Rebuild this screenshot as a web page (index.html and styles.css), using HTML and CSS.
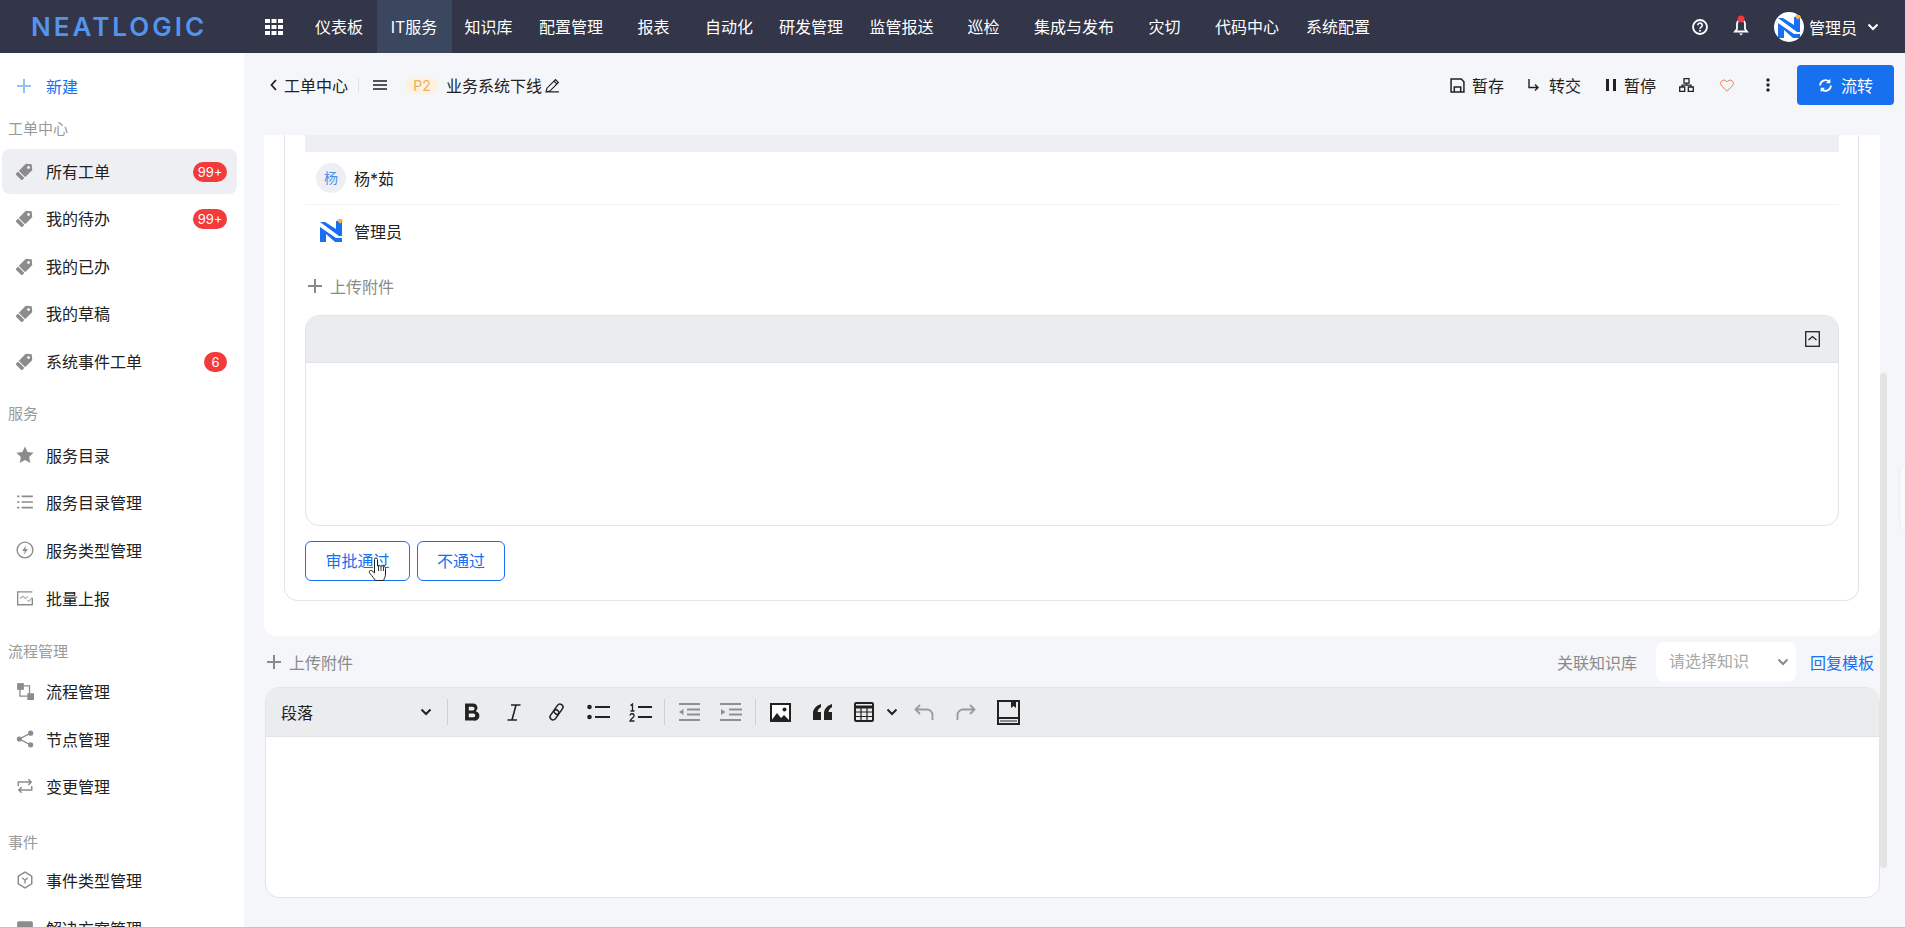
FILE: index.html
```html
<!DOCTYPE html>
<html>
<head>
  <meta charset="utf-8">
  <title>工单中心</title>
  <link rel="stylesheet" href="styles.css">
</head>
<body>
<svg class="defs" width="0" height="0">
  <symbol id="tag" viewBox="0 0 18 18"><g transform="rotate(45 9 9)"><path d="M9 -.5l4.200 3.500a1 1 0 0 1 .3.700V17a1 1 0 0 1-1 1h-7a1 1 0 0 1-1-1V3.700a1 1 0 0 1 .3-.7z" fill="#8c8c8c"/><circle cx="9" cy="4" r="1.400" fill="#fff"/><path d="M4 13.800h10" stroke="#fff" stroke-width="1"/></g></symbol>
  <symbol id="mark" viewBox="0 0 24 24"><path d="M1 3h5l11 7V2h6v15h-3z" fill="#1670f0"/><path d="M1 8l16 11h6v4h-7L7 15v8H1z" fill="#1670f0"/><path d="M19.500 0h3l1.500 1.800-3 3-3-3z" fill="#f0b44c"/></symbol>
  <symbol id="chev" viewBox="0 0 12 8"><path d="M1.500 1.500L6 6l4.500-4.500" fill="none" stroke="currentColor" stroke-width="2"/></symbol>
</svg>

<div class="app">
  <header class="topbar">
    <div class="logo">NEATLOGIC</div>
    <svg class="apps" width="18" height="16" viewBox="0 0 18 16" fill="#fff">
      <rect x="0" y="0" width="5" height="4"/><rect x="6.500" y="0" width="5" height="4"/><rect x="13" y="0" width="5" height="4"/>
      <rect x="0" y="6" width="5" height="4"/><rect x="6.500" y="6" width="5" height="4"/><rect x="13" y="6" width="5" height="4"/>
      <rect x="0" y="12" width="5" height="4"/><rect x="6.500" y="12" width="5" height="4"/><rect x="13" y="12" width="5" height="4"/>
    </svg>
    <nav class="nav">
      <a>仪表板</a><a class="on">IT服务</a><a>知识库</a><a>配置管理</a><a>报表</a><a>自动化</a><a>研发管理</a><a>监管报送</a><a>巡检</a><a>集成与发布</a><a>灾切</a><a>代码中心</a><a>系统配置</a>
    </nav>
    <div class="top-right">
      <svg width="16" height="16" viewBox="0 0 16 16"><circle cx="8" cy="8" r="7" fill="none" stroke="#fff" stroke-width="1.800"/><path d="M5.800 6.300a2.200 2.200 0 1 1 3.400 1.800c-.8.500-1.200.9-1.200 1.700" fill="none" stroke="#fff" stroke-width="1.600"/><circle cx="8" cy="11.800" r="1" fill="#fff"/></svg>
      <svg class="bell" width="14" height="21" viewBox="0 0 14 21"><path d="M7 5a4 4 0 0 0-4 4v5l-2 2.500h12L11 14V9a4 4 0 0 0-4-4z" fill="none" stroke="#fff" stroke-width="1.800"/><path d="M5 18.500h4L7 20.500z" fill="#fff"/><circle cx="7" cy="4" r="3.500" fill="#f33b3b"/></svg>
      <div class="top-user">
        <div class="top-avatar"><svg width="24" height="24"><use href="#mark"/></svg></div>
        <span>管理员</span>
        <svg class="top-chev" width="12" height="8"><use href="#chev"/></svg>
      </div>
    </div>
  </header>

  <div class="layout">
    <aside class="side">
      <a class="side-new">
        <svg width="14" height="14" viewBox="0 0 14 14"><path d="M7 0v14M0 7h14" stroke="#8cc3f9" stroke-width="2"/></svg>
        <span>新建</span>
      </a>
      <div class="side-label side-label-first">工单中心</div>
      <a class="side-row active"><svg class="ico"><use href="#tag"/></svg>所有工单<b class="badge">99+</b></a>
      <a class="side-row"><svg class="ico"><use href="#tag"/></svg>我的待办<b class="badge">99+</b></a>
      <a class="side-row"><svg class="ico"><use href="#tag"/></svg>我的已办</a>
      <a class="side-row"><svg class="ico"><use href="#tag"/></svg>我的草稿</a>
      <a class="side-row"><svg class="ico"><use href="#tag"/></svg>系统事件工单<b class="badge badge-one">6</b></a>

      <div class="side-label side-label-service">服务</div>
      <a class="side-row"><svg class="ico" viewBox="0 0 16 16"><path d="M8 .5l2.300 4.900 5.300.7-3.900 3.700 1 5.300L8 12.500l-4.700 2.600 1-5.300L.4 6.100l5.300-.7z" fill="#8c8c8c"/></svg>服务目录</a>
      <a class="side-row"><svg class="ico" viewBox="0 0 16 16"><path d="M1 3h2M5 3h10M1 8h2M5 8h10M1 13h2M5 13h10" stroke="#8c8c8c" stroke-width="1.400"/></svg>服务目录管理</a>
      <a class="side-row"><svg class="ico" viewBox="0 0 16 16"><circle cx="8" cy="8" r="7" fill="none" stroke="#8c8c8c" stroke-width="1.200"/><path d="M9 3.500L5.500 8.800h2.300L7 12.500l3.500-5.300H8.200z" fill="#8c8c8c"/></svg>服务类型管理</a>
      <a class="side-row"><svg class="ico" viewBox="0 0 16 16"><path d="M14.500 8v6h-13V2.500h13" fill="none" stroke="#8c8c8c" stroke-width="1.200"/><path d="M3.500 8.500l2.500-2 2.500 2 2-2M10 10l1.500 1 3-3.500" fill="none" stroke="#aaa" stroke-width="1"/></svg>批量上报</a>

      <div class="side-label side-label-flow">流程管理</div>
      <a class="side-row"><svg class="ico" viewBox="0 0 16 16"><rect x="1" y="1" width="6" height="6" fill="#8c8c8c"/><rect x="10" y="10" width="6" height="6" fill="#8c8c8c"/><path d="M7 3.500h5v6.500M3.500 7v5.500H10" fill="none" stroke="#8c8c8c" stroke-width="1.200"/></svg>流程管理</a>
      <a class="side-row"><svg class="ico" viewBox="0 0 16 16"><circle cx="13" cy="2.800" r="2.300" fill="#8c8c8c"/><circle cx="13" cy="13.200" r="2.300" fill="#8c8c8c"/><circle cx="3" cy="8" r="2.300" fill="#8c8c8c"/><path d="M13 2.800L3 8l10 5.200" fill="none" stroke="#8c8c8c" stroke-width="1.200"/></svg>节点管理</a>
      <a class="side-row"><svg class="ico" viewBox="0 0 16 16"><path d="M2 8V4.500h11M11 2l2.500 2.500L11 7M14 8v3.500H3M5 9l-2.500 2.500L5 14" fill="none" stroke="#8c8c8c" stroke-width="1.300"/></svg>变更管理</a>

      <div class="side-label side-label-event">事件</div>
      <a class="side-row"><svg class="ico" viewBox="0 0 16 16"><path d="M8 1l6 3.500v7L8 15l-6-3.500v-7z" fill="none" stroke="#8c8c8c" stroke-width="1.300"/><path d="M5.500 6L8 8.200 10.500 6M8 8.200V11" fill="none" stroke="#8c8c8c" stroke-width="1.200"/></svg>事件类型管理</a>
      <a class="side-row"><svg class="ico" viewBox="0 0 16 16"><rect x="1" y="2" width="14" height="12" rx="1.500" fill="#8c8c8c"/></svg>解决方案管理</a>
    </aside>

    <main class="main">
      <div class="subbar">
        <div class="crumb">
          <svg width="7" height="12" viewBox="0 0 7 12"><path d="M6 1L1.500 6 6 11" fill="none" stroke="#212121" stroke-width="1.800"/></svg>
          <span class="crumb-back">工单中心</span>
          <i class="crumb-line"></i>
          <svg class="crumb-menu" width="14" height="10" viewBox="0 0 14 10"><path d="M0 1h14M0 5h14M0 9h14" stroke="#212121" stroke-width="1.400"/></svg>
          <span class="prio">P2</span>
          <span class="crumb-title">业务系统下线</span>
          <svg width="15" height="15" viewBox="0 0 14 14"><path d="M1 13l.8-3.500L9.800 1.500l2.700 2.700-8 8zM8.500 3l2.500 2.500M1 13h12" fill="none" stroke="#212121" stroke-width="1.100"/></svg>
        </div>
        <div class="actions">
          <a class="act"><svg width="15" height="15" viewBox="0 0 14 14"><path d="M1 1h9.500L13 3.500V13H1zM4 13V8.500h6V13" fill="none" stroke="#212121" stroke-width="1.400"/></svg>暂存</a>
          <a class="act act-turn"><svg width="13" height="14" viewBox="0 0 13 14"><path d="M2 1v8.500h9M8 6.500l3 3-3 3" fill="none" stroke="#212121" stroke-width="1.400"/></svg>转交</a>
          <a class="act act-pause"><svg width="10" height="12" viewBox="0 0 10 12"><path d="M0 0h3v12H0zM7 0h3v12H7z" fill="#212121"/></svg>暂停</a>
          <svg class="act-icon" width="15" height="14" viewBox="0 0 15 14"><path d="M5 .7h5v4.500H5zM.7 9h5v4.300h-5zM9.300 9h5v4.300h-5zM7.500 5.200v2H3v2M7.500 7.200H12v2" fill="none" stroke="#212121" stroke-width="1.300"/></svg>
          <svg class="act-heart" width="14" height="13" viewBox="0 0 14 13"><path d="M7 12.200L1.500 6.800a3.400 3.400 0 0 1 0-4.700 3.400 3.400 0 0 1 4.800 0l.7.800.7-.8a3.400 3.400 0 0 1 4.800 0 3.400 3.400 0 0 1 0 4.700z" fill="none" stroke="#e8825a" stroke-width="1"/></svg>
          <svg class="act-dots" width="4" height="14" viewBox="0 0 4 14" fill="#212121"><circle cx="2" cy="2" r="1.700"/><circle cx="2" cy="7" r="1.700"/><circle cx="2" cy="12" r="1.700"/></svg>
          <a class="flow-btn"><svg width="15" height="15" viewBox="0 0 14 14"><path d="M2 7a5 5 0 0 1 8.500-3.500M12 7a5 5 0 0 1-8.500 3.500" fill="none" stroke="#fff" stroke-width="1.700"/><path d="M11.500.8v4h-4zM2.500 13.200v-4h4z" fill="#fff"/></svg>流转</a>
        </div>
      </div>

      <div class="content">
        <section class="card">
          <div class="panel">
            <div class="band"></div>
            <div class="user-row user-row-line">
              <span class="avatar-text">杨</span>
              <span>杨*茹</span>
            </div>
            <div class="user-row user-row-admin">
              <svg class="avatar-mark" width="24" height="24"><use href="#mark"/></svg>
              <span>管理员</span>
            </div>
            <a class="upload upload-inner">
              <svg width="14" height="14" viewBox="0 0 14 14"><path d="M7 0v14M0 7h14" stroke="#8a8a8a" stroke-width="2"/></svg>上传附件
            </a>
            <div class="box">
              <div class="box-head">
                <svg width="15" height="16" viewBox="0 0 15 16"><rect x=".7" y=".7" width="13.600" height="14.600" fill="none" stroke="#222" stroke-width="1.300"/><path d="M3.500 9l4-3.500 4 3.500" fill="none" stroke="#222" stroke-width="1.300"/></svg>
              </div>
            </div>
            <div class="btns">
              <a class="line-btn line-btn-wide">审批通过
                <svg class="hand" width="20" height="25" viewBox="0 0 20 25"><path d="M6.500 14V2.500a1.500 1.500 0 0 1 3 0V9l1.500-.5 1.500.5 1.500-.3 1.500.5c1.300.3 2 1 2 2.300v5.500c0 2.500-1 4-2 6.500H7.500c-1.500-2-3-4-5.500-7-.9-1.200-1-2.400 0-3 1-.6 2.500.5 4.500 2.500z" fill="#fff" stroke="#222" stroke-width="1"/><path d="M10.500 9v5M13 9v5M15.500 9.500V14" stroke="#222" stroke-width=".9"/></svg>
              </a>
              <a class="line-btn">不通过</a>
            </div>
          </div>
        </section>

        <div class="reply-bar">
          <a class="upload">
            <svg width="14" height="14" viewBox="0 0 14 14"><path d="M7 0v14M0 7h14" stroke="#8a8a8a" stroke-width="2"/></svg>上传附件
          </a>
          <div class="reply-right">
            <span class="reply-label">关联知识库</span>
            <div class="select"><span>请选择知识</span><svg width="12" height="8"><use href="#chev"/></svg></div>
            <a class="reply-link">回复模板</a>
          </div>
        </div>

        <div class="editor">
          <div class="toolbar">
            <div class="tb-format"><span>段落</span><svg width="12" height="8"><use href="#chev"/></svg></div>
            <i class="tb-sep"></i>
            <a class="tb"><svg width="17" height="20" viewBox="0 0 16 18"><path d="M1 1h7.500a4 4 0 0 1 2.500 7.200A4.500 4.500 0 0 1 9 17H1zM4.500 4v3.500h3.700a1.750 1.750 0 0 0 0-3.500zM4.500 10.500V14h4.300a1.750 1.750 0 0 0 0-3.500z" fill="#222" fill-rule="evenodd"/></svg></a>
            <a class="tb"><svg width="14" height="17" viewBox="0 0 14 17"><path d="M4 1h9.500M.5 16H10M9 1L5 16" fill="none" stroke="#222" stroke-width="1.600"/></svg></a>
            <a class="tb"><svg width="19" height="20" viewBox="0 0 19 20"><g fill="none" stroke="#222" stroke-width="1.500" transform="rotate(-55 9.500 10)"><rect x="0.500" y="7" width="11" height="6" rx="3"/><rect x="7.500" y="7" width="11" height="6" rx="3"/></g></svg></a>
            <a class="tb"><svg width="23" height="16" viewBox="0 0 23 16"><circle cx="2.500" cy="3" r="2.300" fill="#222"/><circle cx="2.500" cy="13" r="2.300" fill="#222"/><path d="M8 3h15M8 13h15" stroke="#222" stroke-width="2"/></svg></a>
            <a class="tb"><svg width="23" height="19" viewBox="0 0 23 19"><path d="M1.500 2.500L3.500 1v7M1.500 8h4M1 12.500a2 2 0 0 1 4 .5c0 1.500-3.500 3-4 5h4.500" fill="none" stroke="#222" stroke-width="1.300"/><path d="M9 4h14M9 14h14" stroke="#222" stroke-width="2"/></svg></a>
            <i class="tb-sep tb-sep-mid"></i>
            <a class="tb"><svg width="22" height="18" viewBox="0 0 22 18"><path d="M1 1h21M9 6.500h13M9 11.500h13M1 17h21" stroke="#8f8f8f" stroke-width="2"/><path d="M5.500 6v6L1 9z" fill="#8f8f8f"/></svg></a>
            <a class="tb"><svg width="22" height="18" viewBox="0 0 22 18"><path d="M0 1h21M9 6.500h13M9 11.500h13M0 17h21" stroke="#8f8f8f" stroke-width="2"/><path d="M1 6v6l4.500-3z" fill="#8f8f8f"/></svg></a>
            <i class="tb-sep tb-sep-mid"></i>
            <a class="tb"><svg width="21" height="19" viewBox="0 0 21 19"><rect x="1" y="1" width="19" height="17" fill="#fff" stroke="#222" stroke-width="2"/><path d="M1 18l6-8 4 5 3-3 6 6z" fill="#222"/><circle cx="14.500" cy="6.500" r="2" fill="#222"/></svg></a>
            <a class="tb"><svg width="19" height="16" viewBox="0 0 19 16" fill="#222"><path d="M8 0C3 1.500 0 5 0 9.500V16h8V8H4.500C4.800 5.800 6 4.200 8 3.200zM19 0c-5 1.500-8 5-8 9.500V16h8V8h-3.500c.3-2.200 1.500-3.800 3.500-4.800z"/></svg></a>
            <a class="tb"><svg width="20" height="20" viewBox="0 0 20 20"><rect x="1" y="1" width="18" height="18" rx="1" fill="none" stroke="#222" stroke-width="2"/><path d="M1 5h18" stroke="#222" stroke-width="3"/><path d="M1 10h18M1 14.500h18M7 5v14M13 5v14" stroke="#222" stroke-width="1.200"/></svg></a>
            <svg class="tb-chev" width="12" height="8"><use href="#chev"/></svg>
            <a class="tb"><svg width="20" height="17" viewBox="0 0 20 17"><path d="M6 1L1.500 5.500 6 10M1.500 5.500H13a5.500 5.500 0 0 1 5.500 5.500v5" fill="none" stroke="#9a9a9a" stroke-width="1.800"/></svg></a>
            <a class="tb"><svg width="20" height="17" viewBox="0 0 20 17"><path d="M14 1l4.500 4.500L14 10M18.500 5.500H7A5.500 5.500 0 0 0 1.500 11v5" fill="none" stroke="#9a9a9a" stroke-width="1.800"/></svg></a>
            <a class="tb"><svg width="23" height="25" viewBox="0 0 23 25"><rect x="1" y="1" width="21" height="23" fill="none" stroke="#222" stroke-width="2"/><path d="M1 18h21" stroke="#222" stroke-width="2"/><path d="M3 21h17" stroke="#888" stroke-width="2"/><path d="M14 1v7l2.500-2 2.500 2V1z" fill="#222"/></svg></a>
          </div>
        </div>
      </div>

      <i class="scroll-thumb"></i>
      <i class="edge-tab"></i>
    </main>
  </div>
</div>
</body>
</html>
```

FILE: styles.css
```css
* { box-sizing: border-box; }

html, body { margin: 0; height: 100%; overflow: hidden; }

body {
  font-family: Inter, "Noto Sans CJK SC", sans-serif;
  font-size: 16px;
  color: #212121;
  background: #f4f6fa;
}

a { display: block; }
i { display: block; }
svg { display: block; flex: none; overflow: visible; }
.defs { position: absolute; }

.app {
  height: 928px;
  display: flex;
  flex-direction: column;
  border-bottom: 1px solid #c4c4c4;
  overflow: hidden;
}

/* top bar */
.topbar {
  flex: none;
  height: 53px;
  display: flex;
  align-items: center;
  background: #333548;
  color: #fff;
}

.logo {
  width: 233px;
  padding-left: 31px;
  font-family: Inter, sans-serif;
  font-size: 26px;
  font-weight: 600;
  line-height: 30px;
  letter-spacing: 3px;
  color: #5394ef;
  white-space: nowrap;
}

.apps { margin-left: 32px; }

.nav {
  margin-left: 18.500px;
  height: 53px;
  display: grid;
  grid-template-columns: 75px 75px 74px 91px 74px 77px 87px 94px 70px 111px 70px 95px 87px;
}

.nav a {
  display: flex;
  align-items: center;
  justify-content: center;
  white-space: nowrap;
  padding-bottom: 2px;
}

.nav a.on { background: #3a475f; }

.top-right {
  margin-left: auto;
  display: flex;
  align-items: center;
  padding-right: 26px;
}

.bell { margin-left: 26px; margin-top: -3px; }

.top-user {
  margin-left: 26px;
  display: flex;
  align-items: center;
}

.top-avatar {
  width: 30px;
  height: 30px;
  border-radius: 50%;
  background: #fff;
  display: flex;
  align-items: center;
  justify-content: center;
  margin-right: 5px;
}

.top-chev { margin-left: 10px; color: #fff; }

/* left menu */
.layout { flex: 1; display: flex; min-height: 0; }

.side {
  flex: none;
  width: 244px;
  background: #fff;
  padding: 17px 7px 0 2px;
  overflow: hidden;
}

.side-new {
  height: 32px;
  display: flex;
  align-items: center;
  gap: 15px;
  padding-left: 15px;
  color: #1670f0;
}

.side-label {
  height: 26px;
  line-height: 26px;
  margin-left: 6px;
  font-size: 15px;
  color: #999;
}

.side-label-first { margin-top: 14px; margin-bottom: 7px; }
.side-label-service { margin-top: 17px; margin-bottom: 6px; }
.side-label-flow { margin-top: 18px; margin-bottom: 4.500px; }
.side-label-event { margin-top: 20px; margin-bottom: 3px; }

.side-row {
  height: 45px;
  margin-bottom: 2.600px;
  display: flex;
  align-items: center;
  padding: 0 10px 2px 14px;
  border-radius: 8px;
  white-space: nowrap;
}

.side-row.active { background: #eeeff3; }

.ico { width: 18px; height: 18px; margin-right: 12px; }

.badge {
  margin-left: auto;
  height: 20px;
  min-width: 34px;
  padding: 0 4px;
  margin-top: 2px;
  border-radius: 10px;
  background: #f33b3b;
  color: #fff;
  font-size: 13px;
  font-weight: 400;
  line-height: 20px;
  text-align: center;
}

.badge-one { min-width: 23px; }

/* main area */
.main { flex: 1; position: relative; min-width: 0; }

.subbar {
  height: 82px;
  display: flex;
  justify-content: space-between;
  align-items: center;
  padding: 0 11px 18px 26px;
}

.crumb { display: flex; align-items: center; }
.crumb-back { margin-left: 7px; }
.crumb-line { width: 1px; height: 14px; margin-left: 10px; background: #e0e1e5; }
.crumb-menu { margin-left: 14px; }

.prio {
  margin-left: 18px;
  width: 34px;
  height: 17px;
  line-height: 17px;
  border-radius: 9px;
  background: #fdf2e0;
  color: #f0b060;
  font-size: 14px;
  text-align: center;
}

.crumb-title { margin: 0 3px 0 7px; }

.actions { display: flex; align-items: center; }

.act { display: flex; align-items: center; gap: 7px; margin-right: 23px; }
.act-turn { gap: 9px; margin-right: 25px; }
.act-pause { gap: 8px; margin-right: 23px; }
.act-icon { margin-right: 26px; }
.act-heart { margin-right: 32px; }
.act-dots { margin-right: 27px; }

.flow-btn {
  width: 97px;
  height: 40px;
  display: flex;
  align-items: center;
  justify-content: center;
  gap: 8px;
  border-radius: 4px;
  background: #1670f0;
  color: #fff;
}

.content { padding: 0 25px 0 20px; }

.card {
  height: 501px;
  background: #fff;
  border-radius: 0 0 12px 12px;
  padding: 0 21px 0 20px;
}

.panel {
  height: 466px;
  padding: 0 19px 0 20px;
  border: 1px solid #e4e5e8;
  border-top: 0;
  border-radius: 0 0 14px 14px;
}

.band { height: 17px; background: #eeeff3; }

.user-row {
  height: 53px;
  display: flex;
  align-items: center;
  padding-left: 11px;
  gap: 8px;
}

.user-row-line { border-bottom: 1px solid #f2f2f4; }
.user-row-admin { height: 52px; }

.avatar-text {
  width: 30px;
  height: 30px;
  border-radius: 50%;
  background: #eeeff3;
  color: #4a90e8;
  font-size: 14px;
  line-height: 30px;
  text-align: center;
}

.avatar-mark { margin: 0 3px 0 3px; }

.upload {
  display: flex;
  align-items: center;
  gap: 8px;
  color: #8a8a8a;
}

.upload-inner {
  height: 32px;
  margin: 13px 0 13px 3px;
}

.box {
  height: 211px;
  border: 1px solid #e3e4e7;
  border-radius: 14px;
  overflow: hidden;
}

.box-head {
  height: 47px;
  display: flex;
  align-items: center;
  justify-content: flex-end;
  padding: 0 18px 0 0;
  background: #ebecee;
  border-bottom: 1px solid #e3e4e7;
}

.btns { display: flex; gap: 7px; margin-top: 15px; }

.line-btn {
  position: relative;
  width: 88px;
  height: 40px;
  line-height: 38px;
  text-align: center;
  border: 1px solid #1670f0;
  border-radius: 6px;
  color: #1670f0;
}

.line-btn-wide { width: 105px; }

.hand { position: absolute; left: 62px; top: 15px; }

.reply-bar {
  height: 51px;
  display: flex;
  align-items: center;
  justify-content: space-between;
  padding: 0 6px 0 3px;
}

.reply-right { display: flex; align-items: center; }
.reply-label { color: #8a8a8a; margin-right: 19px; }

.select {
  width: 140px;
  height: 40px;
  display: flex;
  align-items: center;
  justify-content: space-between;
  padding: 0 7px 4px 13px;
  margin-right: 14px;
  background: #fff;
  border-radius: 8px;
  color: #a8a8a8;
}

.select svg { color: #8a8a8a; margin-top: 5px; }

.reply-link { color: #1670f0; }

.editor {
  height: 211px;
  margin-left: 1px;
  background: #fff;
  border: 1px solid #e3e4e7;
  border-radius: 14px;
  overflow: hidden;
}

.toolbar {
  height: 49px;
  display: flex;
  align-items: center;
  padding-left: 15px;
  background: #ebecee;
  border-bottom: 1px solid #e3e4e7;
}

.tb-format {
  width: 151px;
  display: flex;
  align-items: center;
  justify-content: space-between;
}

.tb-sep { width: 1px; height: 26px; margin: 0 3px 0 15px; background: #cfd0d3; }
.tb-sep-mid { margin: 0 3px 0 3px; }

.tb { width: 42px; height: 42px; display: flex; align-items: center; justify-content: center; }

.tb-chev { color: #222; margin: 0 5px 0 1px; }

.scroll-thumb {
  position: absolute;
  left: 1636px;
  top: 320px;
  width: 7px;
  height: 495px;
  border-radius: 4px;
  background: #e3e3e4;
}

.edge-tab {
  position: absolute;
  left: 1655px;
  top: 409px;
  width: 20px;
  height: 71px;
  border-radius: 10px 0 0 10px;
  background: #f8f9fb;
  border: 1px solid #eceef2;
}
```
